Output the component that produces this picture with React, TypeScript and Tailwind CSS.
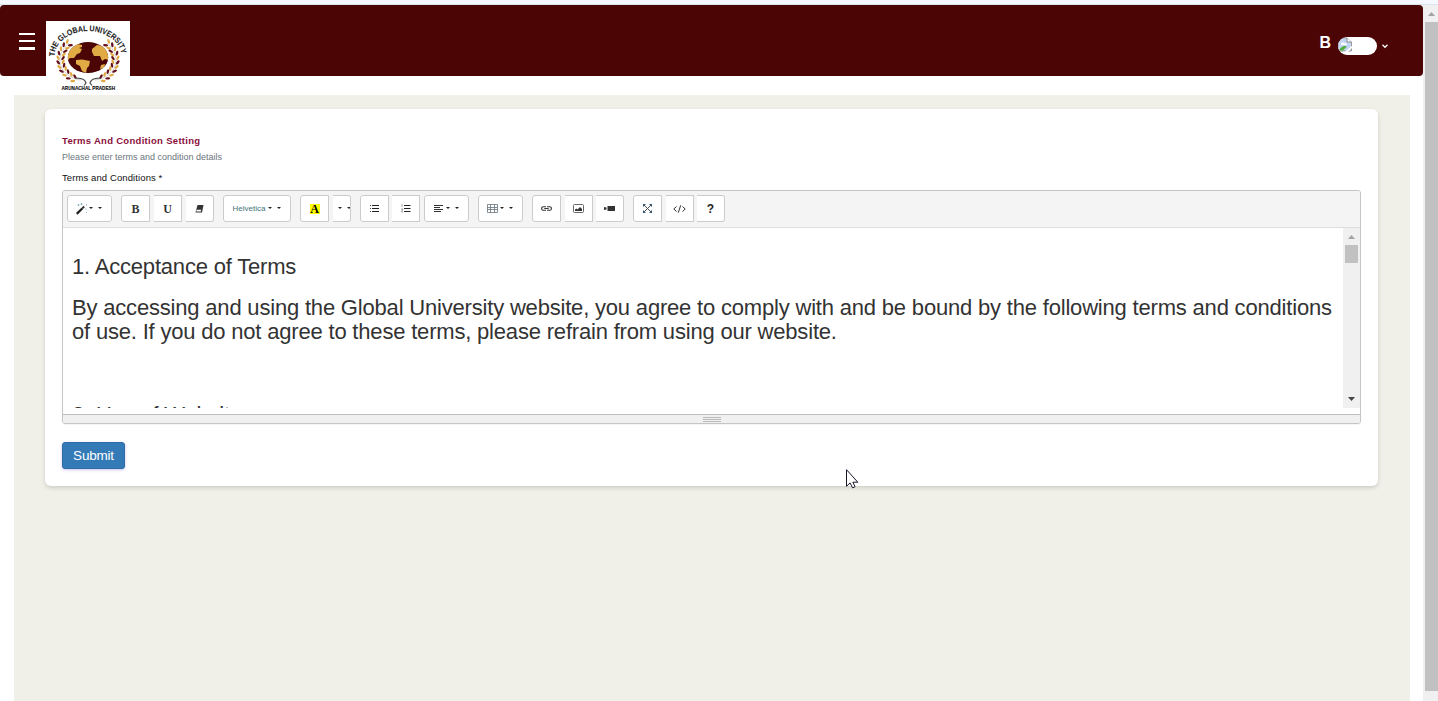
import React from "react";

type Pos = "solo" | "first" | "mid" | "last" | "full";

const shapes: Record<Pos, string> = {
  solo: "border rounded-[3px]",
  first: "border rounded-l-[3px]",
  mid: "border border-l-0",
  last: "border border-l-0 rounded-r-[3px]",
  full: "border",
};

function Btn({ pos = "mid", w = "w-[28px]", children }: { pos?: Pos; w?: string; children: React.ReactNode }) {
  return (
    <button className={`flex h-[27px] shrink-0 items-center justify-center overflow-hidden border-[#ccc] bg-white text-[#333] ${shapes[pos]} ${w}`}>
      {children}
    </button>
  );
}

function Caret() {
  return (
    <svg width="4" height="2" viewBox="0 0 4 2" className="shrink-0">
      <path d="M0 0h4L2 2z" fill="#222" />
    </svg>
  );
}

function Carets() {
  return (
    <span className="mb-px flex items-center gap-[5px]">
      <Caret />
      <Caret />
    </span>
  );
}

const leaves = Array.from({ length: 11 }, (_, i) => {
  const a = ((134 + i * 10.5) * Math.PI) / 180;
  const x = 42 + Math.cos(a) * 27.5;
  const y = 38.5 - Math.sin(a) * 22.5;
  const heading = (Math.atan2(-Math.cos(a) * 22.5, -Math.sin(a) * 27.5) * 180) / Math.PI + 180;
  return { x, y, heading, even: i % 2 === 0 };
});

function Logo() {
  return (
    <svg width="84" height="74" viewBox="0 0 84 74" className="relative z-10 block shrink-0 bg-white">
      <defs>
        <path id="crest" d="M8.500 35.500 A33 25 0 0 1 75.500 35.500" fill="none" />
        <clipPath id="globe"><ellipse cx="42" cy="36.5" rx="20.2" ry="15.5" /></clipPath>
      </defs>
      <text fontFamily="Liberation Sans, sans-serif" fontSize="8" fontWeight="700" fill="#1b1b1b" stroke="#1b1b1b" strokeWidth=".1" textLength="90" lengthAdjust="spacingAndGlyphs">
        <textPath href="#crest" textLength="90" lengthAdjust="spacingAndGlyphs">THE GLOBAL UNIVERSITY</textPath>
      </text>
      <ellipse cx="42" cy="36.5" rx="20.2" ry="15.5" fill="#4b0505" />
      <g clipPath="url(#globe)" fill="#e0ab45">
        <path d="M21 33l4-6 6-4 5 1 0 2-3 1 3 1-2 4-3 1-3 4-4 0-2 2z" />
        <path d="M30 39l6-.5 8 1.500-1 5-2 2-1 5-4-2-2-5-4-2z" />
        <path d="M46 28l5-4 7 1 5 6v8l-4-1-3 2-2-5-6 0-2-4z" />
        <path d="M55 44l4-1-1 4-4 1z" />
      </g>
      {[1, -1].map((s) => (
        <g key={s} transform={s === 1 ? undefined : "translate(84 0) scale(-1 1)"}>
          <path d="M23 22C7 35 13 56 35 59" fill="none" stroke="#bbb" strokeWidth=".7" />
          {leaves.map((l, i) => (
            <g key={i} transform={`translate(${l.x} ${l.y}) rotate(${l.heading})`}>
              <ellipse rx="2.5" ry="1.2" transform="translate(0 -2.5) rotate(-32)" fill={l.even ? "#dfa943" : "#651019"} />
              <ellipse rx="2.5" ry="1.2" transform="translate(0 2.5) rotate(32)" fill={l.even ? "#651019" : "#dfa943"} />
            </g>
          ))}
          <path d="M29 57q8 0 10 3l1 2-2 2.500" fill="none" stroke="#444" strokeWidth="1.2" />
        </g>
      ))}
      <text x="15.5" y="69" textLength="53.5" lengthAdjust="spacingAndGlyphs" fontFamily="Liberation Sans, sans-serif" fontSize="5.2" fontWeight="700" fill="#111" stroke="#111" strokeWidth=".15">ARUNACHAL PRADESH</text>
    </svg>
  );
}

function BrokenImage() {
  return (
    <svg width="16" height="16" viewBox="0 0 16 16" className="block">
      <path d="M0 1h9l4.500 4v9H0z" fill="#c3d4f4" stroke="#9a9a9a" />
      <path d="M9 1v4h4.500" fill="#fff" stroke="#8a8a8a" />
      <path d="M3 7q1-3 3-1 3 0 3 2H3z" fill="#fff" />
      <path d="M1 13.500q3-6 8-4l-4 4z" fill="#55ad3c" />
      <path d="M6.500 15l8-6.500v2l-5 4.500z" fill="#fff" />
    </svg>
  );
}

function Wand() {
  return (
    <svg width="12" height="12" viewBox="0 0 12 12">
      <path d="M.7 10.800l5.500-5.300" stroke="#222" strokeWidth="2.300" />
      <path d="M6.200 5.500l2-2" stroke="#333" strokeWidth="1.800" />
      <path d="M2.500 1v2M1.500 2h2M5.500 0v2M4.500 1h2M10.500 1v1.500M10 5.500v1.500M10.500 9v1" stroke="#6da0b5" strokeWidth=".7" />
    </svg>
  );
}

function Toolbar() {
  return (
    <div className="flex h-[37px] shrink-0 items-start border-b border-[#ddd] bg-[#f4f4f4] pl-[4px] pt-[4px]">
      <Btn pos="solo" w="w-[45px]"><span className="mr-[2px] flex items-center gap-px"><Wand /><Carets /></span></Btn>
      <div className="ml-[9px] flex">
        <Btn pos="first" w="w-[29px]"><b className="font-['Liberation_Serif',serif] text-[12px]">B</b></Btn>
        <span className="ml-[4px] flex"><Btn><b className="font-['Liberation_Serif',serif] text-[12px]">U</b></Btn></span>
        <span className="ml-[4px] flex">
          <Btn pos="last">
            <svg width="9" height="8" viewBox="0 0 9 8" className="mr-px"><path d="M2.500 0h6L7 7.500H.5z" fill="#333" /><path d="M1.700 4.800h4.500l-.4 1.600H1.200z" fill="#fff" /></svg>
          </Btn>
        </span>
      </div>
      <span className="ml-[9px] flex">
        <Btn pos="solo" w="w-[68px]">
          <span className="flex items-center gap-[3px]"><span className="text-[8px] text-[#3f7277]">Helvetica</span><Carets /></span>
        </Btn>
      </span>
      <div className="ml-[9px] flex gap-[4px]">
        <Btn pos="first" w="w-[29px]"><b className="flex h-[10px] w-[10px] items-center justify-center bg-[#ff0] font-['Liberation_Serif',serif] text-[12px] text-black">A</b></Btn>
        <Btn pos="last" w="w-[18px]"><span className="flex pl-[5px]"><Carets /></span></Btn>
      </div>
      <div className="ml-[9px] flex">
        <Btn pos="first" w="w-[29px]">
          <svg width="9" height="7" viewBox="0 0 9 7" className="mb-px"><path d="M2 .5h7M2 3.500h7M2 6.500h7" stroke="#222" /><path d="M0 .5h1M0 3.500h1M0 6.500h1" stroke="#543d54" /></svg>
        </Btn>
        <span className="ml-[3px] flex">
          <Btn>
            <svg width="10" height="9" viewBox="0 0 10 9"><path d="M3 1.500h6.500M3 4.500h6.500M3 7.500h6.500" stroke="#222" /><path d="M1 0v3M0 5h2L.5 8H2" fill="none" stroke="#777" strokeWidth=".7" /></svg>
          </Btn>
        </span>
        <span className="ml-[4px] flex">
          <Btn pos="solo" w="w-[45px]">
            <span className="flex items-center gap-[3px]">
              <svg width="9" height="7" viewBox="0 0 9 7" className="mb-px"><path d="M0 .5h9M0 2.500h6M0 4.500h9M0 6.500h7" stroke="#333" /></svg>
              <Carets />
            </span>
          </Btn>
        </span>
      </div>
      <span className="ml-[9px] flex">
        <Btn pos="solo" w="w-[45px]">
          <span className="mr-[2px] flex items-center gap-[2px]">
            <svg width="11" height="9" viewBox="0 0 11 9"><path d="M.5.5h10v8H.5zM.5 3.500h10M.5 5.500h10M3.500.5v8M7.500.5v8" fill="none" stroke="#65717b" strokeWidth=".8" /></svg>
            <Carets />
          </span>
        </Btn>
      </span>
      <div className="ml-[9px] flex">
        <Btn pos="first" w="w-[29px]">
          <svg width="11" height="5" viewBox="0 0 11 5"><path d="M5 .7H2.400a1.800 1.800 0 0 0 0 3.600H5M6 .7h2.600a1.800 1.800 0 0 1 0 3.600H6M3.300 2.500h4.400" fill="none" stroke="#333" strokeWidth="1.100" /></svg>
        </Btn>
        <span className="ml-[4px] flex">
          <Btn>
            <svg width="11" height="9" viewBox="0 0 11 9"><rect x=".5" y=".5" width="10" height="8" rx="1" fill="none" stroke="#666" /><path d="M2 7V5.500L3.500 4.500l1 1L7 3l2 2v2z" fill="#333" /></svg>
          </Btn>
        </span>
        <span className="ml-[3px] flex">
          <Btn pos="last"><svg width="11" height="5" viewBox="0 0 11 5" className="mb-px"><path d="M3.500 0H11v5H3.500zM0 1l2.500.5v2L0 4z" fill="#333" /></svg></Btn>
        </span>
      </div>
      <div className="ml-[9px] flex">
        <Btn pos="first" w="w-[29px]">
          <svg width="9" height="9" viewBox="0 0 9 9"><path d="M1 1l7 7M8 1L1 8" stroke="#4a545e" strokeWidth="1" /><path d="M0 0h3L0 3zM6 0h3v3zM0 6l3 3H0zM9 6v3H6z" fill="#39566a" /></svg>
        </Btn>
        <span className="ml-[4px] flex">
          <Btn><svg width="13" height="8" viewBox="0 0 13 8"><path d="M3.500 1.500L.8 4l2.700 2.500M9.500 1.500L12.200 4 9.500 6.500M7.700.3L5.300 7.700" fill="none" stroke="#333" strokeWidth="1" /></svg></Btn>
        </span>
        <span className="ml-[3px] flex"><Btn pos="last"><b className="font-['Liberation_Sans',sans-serif] text-[12px] text-[#222]">?</b></Btn></span>
      </div>
    </div>
  );
}

export default function App() {
  return (
    <div className="relative flex h-[701px] w-[1438px] flex-col overflow-hidden bg-white font-['Liberation_Sans',Arial,sans-serif]">
      <div className="h-[5px] shrink-0 border-b border-[#dce5ee] bg-[#f5f9ff]" />
      <div className="flex min-h-0 flex-1">
        <main className="flex w-[1423px] shrink-0 flex-col">
          <header className="flex h-[71px] shrink-0 items-start rounded-[4px] bg-[#4b0505]">
            <div className="ml-[19px] mt-[28px] flex w-[16px] flex-col">
              <span className="h-[2px] bg-white" />
              <span className="mt-[5px] h-[2px] bg-white" />
              <span className="mt-[5px] h-[3px] bg-white" />
            </div>
            <div className="ml-[11px] mt-[16px]"><Logo /></div>
            <div className="ml-auto mr-[35px] mt-[28px] flex items-start text-white">
              <b className="text-[16px] leading-[19px]">B</b>
              <div className="ml-[7px] mt-[4px] h-[18px] w-[39px] overflow-hidden rounded-[9px] bg-white"><BrokenImage /></div>
              <svg width="6" height="5" viewBox="0 0 6 5" className="ml-[5px] mt-[11px]"><path d="M.5.8L3 3.300 5.500.8" fill="none" stroke="#fff" strokeWidth="1.300" /></svg>
            </div>
          </header>
          <section className="ml-[14px] mt-[19px] w-[1396px] flex-1 bg-[#f0f0e8] pl-[31px] pt-[14px]">
            <div className="flex h-[377px] w-[1333px] flex-col rounded-[6px] bg-white pl-[17px] pt-[25px] shadow-[0_2px_4px_rgba(0,0,0,0.14)]">
              <h1 className="h-[15px] whitespace-nowrap text-[9.5px] font-bold leading-[14px] tracking-[0.3px] text-[#8b0f3b]">Terms And Condition Setting</h1>
              <p className="h-[21px] whitespace-nowrap text-[9px] leading-[16px] text-[#6c757d]">Please enter terms and condition details</p>
              <label className="h-[20px] whitespace-nowrap text-[9.5px] leading-[16px] tracking-[0.1px] text-[#111]">Terms and Conditions *</label>
              <div className="flex h-[234px] w-[1299px] shrink-0 flex-col overflow-hidden rounded-[3px] border border-[#c5c5c5] shadow-[0_1px_1px_rgba(0,0,0,0.05)]">
                <Toolbar />
                <div className="flex h-[180px] shrink-0">
                  <article className="h-[180px] w-[1280px] shrink-0 overflow-hidden pl-[9px] pt-[27px] text-[22px] leading-[24px] tracking-[-0.188px] text-[#333]">
                    <p className="whitespace-nowrap">1. Acceptance of Terms</p>
                    <p className="mt-[17px] whitespace-nowrap">By accessing and using the Global University website, you agree to comply with and be bound by the following terms and conditions<br />of use. If you do not agree to these terms, please refrain from using our website.</p>
                    <p className="mt-[59px] whitespace-nowrap">2. Use of Website</p>
                  </article>
                  <div className="flex w-[17px] shrink-0 flex-col items-center bg-[#f0f0f0]">
                    <svg width="7" height="4" viewBox="0 0 7 4" className="mt-[7px]"><path d="M0 4l3.500-4L7 4z" fill="#a3a3a3" /></svg>
                    <span className="mt-[6px] h-[18px] w-[13px] bg-[#c1c1c1]" />
                    <svg width="7" height="4" viewBox="0 0 7 4" className="mb-[7px] mt-auto"><path d="M0 0l3.500 4L7 0z" fill="#444" /></svg>
                  </div>
                </div>
                <div className="mt-[6px] flex h-[9px] shrink-0 flex-col items-center gap-px border-t border-[#bdbdbd] bg-[#f0f0f0] pt-[2px]">
                  <span className="h-px w-[18px] shrink-0 bg-[#bbb]" />
                  <span className="h-px w-[18px] shrink-0 bg-[#bbb]" />
                  <span className="h-px w-[18px] shrink-0 bg-[#bbb]" />
                </div>
              </div>
              <button className="mt-[18px] h-[27px] w-[63px] shrink-0 rounded-[3px] border border-[#2e6da4] bg-[#337ab7] pt-px text-[13.5px] leading-[24px] tracking-[-0.2px] text-white shadow-[0_1px_3px_rgba(80,60,220,0.3)]">Submit</button>
            </div>
          </section>
        </main>
        <aside className="flex w-[15px] flex-col items-end bg-[#f0f0f0] pt-[7px]">
          <svg width="7" height="4" viewBox="0 0 7 4" className="mr-[3px]"><path d="M0 4l3.500-4L7 4z" fill="#a3a3a3" /></svg>
          <span className="mt-[6px] h-[669px] w-[13px] bg-[#c1c1c1]" />
        </aside>
      </div>
      <svg width="13" height="20" viewBox="0 0 13 20" className="absolute left-[846px] top-[469px]"><path d="M.5.7v16.600l3.600-3.400 2.500 5 2.500-1.200-2.300-4.500h5z" fill="#fff" stroke="#15152a" /></svg>
    </div>
  );
}
